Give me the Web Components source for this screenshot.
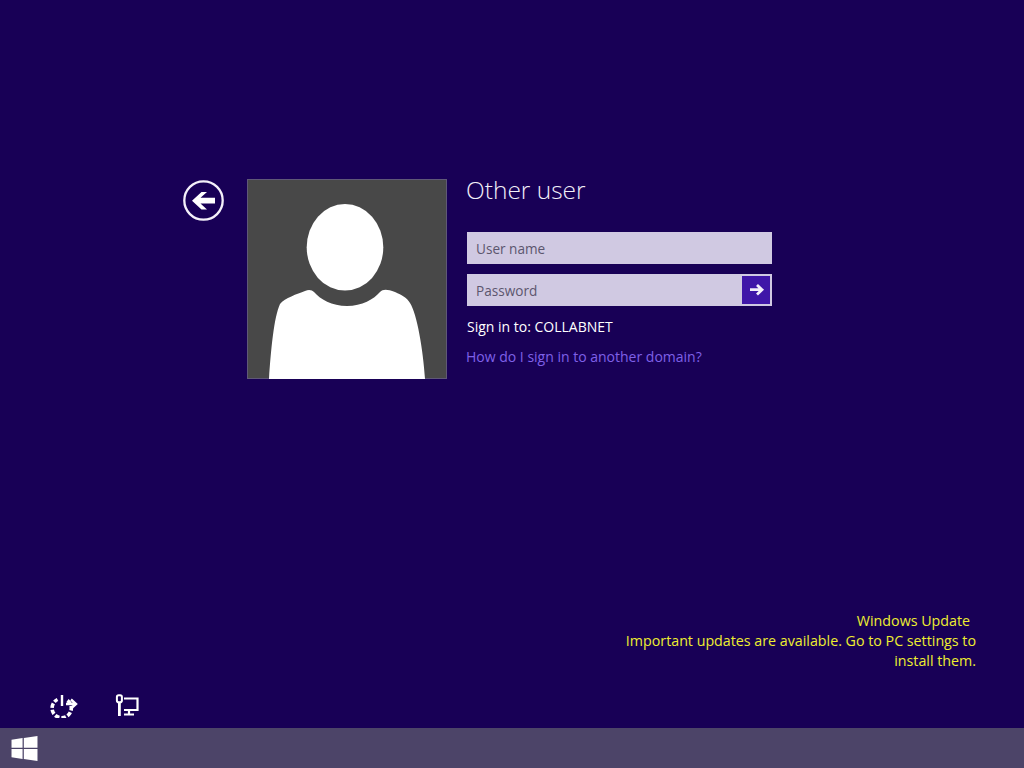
<!DOCTYPE html>
<html>
<head>
<meta charset="utf-8">
<title>Sign in</title>
<style>
    html, body { margin: 0; height: 100%; }
    body { background: #180056; font-family: "Open Sans", "Noto Sans", sans-serif; overflow: hidden; }
</style>
</head>
<body>
<v-lock-screen>
    <v-back-button slot="back"></v-back-button>
    <v-user-tile slot="tile"></v-user-tile>
    <v-login-form slot="form" heading="Other user" domain="COLLABNET" help="How do I sign in to another domain?"></v-login-form>
    <v-notice slot="notice" title="Windows Update">Important updates are available. Go to PC settings to<br>install them.</v-notice>
    <v-status-icons slot="status"></v-status-icons>
    <v-taskbar slot="taskbar"></v-taskbar>
</v-lock-screen>
<script>
    customElements.define('v-lock-screen', class extends HTMLElement {
        constructor() {
            super();
            const shadowRoot = this.attachShadow({mode: 'open'});
            shadowRoot.innerHTML = `<style>
                :host { display: flex; flex-direction: column; height: 768px; }
                .main { flex: 1; display: flex; flex-direction: column; min-height: 0; }
                .login { display: flex; align-items: flex-start; padding: 179px 0 0 183px; }
                .spacer { flex: 1; }
            </style>
            <div class="main">
                <div class="login">
                    <slot name="back"></slot>
                    <slot name="tile"></slot>
                    <slot name="form"></slot>
                </div>
                <div class="spacer"></div>
                <slot name="notice"></slot>
                <slot name="status"></slot>
            </div>
            <slot name="taskbar"></slot>`;
        }
    });

    customElements.define('v-back-button', class extends HTMLElement {
        constructor() {
            super();
            const shadowRoot = this.attachShadow({mode: 'open'});
            shadowRoot.innerHTML = `<style>
                :host { display: block; width: 41px; height: 41px; margin: 1px 23px 0 0; }
                svg { display: block; }
            </style>
            <svg width="41" height="41" viewBox="0 0 41 41">
                <circle cx="20.5" cy="20.5" r="19.2" fill="none" stroke="#f4f0fa" stroke-width="2.3"/>
                <path d="M18.5 12 L9 20.7 L18.5 29.5 H24 L17.5 23.6 H32 V17.8 H17.5 L24 12 Z" fill="#fff"/>
            </svg>`;
        }
    });

    customElements.define('v-user-tile', class extends HTMLElement {
        constructor() {
            super();
            const shadowRoot = this.attachShadow({mode: 'open'});
            shadowRoot.innerHTML = `<style>
                :host { display: block; width: 200px; height: 200px; margin-right: 20px; }
                svg { display: block; }
            </style>
            <svg width="200" height="200" viewBox="0 0 200 200">
                <rect width="200" height="200" fill="#484848"/>
                <rect x=".5" y=".5" width="199" height="199" fill="none" stroke="#5f5877"/>
                <ellipse cx="98" cy="68.3" rx="38.3" ry="43.3" fill="#fff"/>
                <path d="M22 200 C24 170 27 138 33 125 C38 119 50 115 58 112 C62 110 65 111 67 113 C73 120 85 127 100 127 C115 127 127 120 133 113 C136 110 140 110 148 113 C155 116 160 119 163 124 C170 135 176 170 178 200 Z" fill="#fff"/>
            </svg>`;
        }
    });

    customElements.define('v-text-field', class extends HTMLElement {
        constructor() {
            super();
            const shadowRoot = this.attachShadow({mode: 'open'});
            shadowRoot.innerHTML = `<style>
                :host { display: flex; align-items: center; height: 32px; width: 305px; background: #d0c9e2; box-sizing: border-box; }
                .label { flex: 1; padding-left: 9px; font-size: 13.6px; color: #5c566e; }
                ::slotted(*) { flex: none; }
            </style>
            <div class="label">${this.getAttribute('placeholder')}</div>
            <slot></slot>`;
        }
    });

    customElements.define('v-submit-button', class extends HTMLElement {
        constructor() {
            super();
            const shadowRoot = this.attachShadow({mode: 'open'});
            shadowRoot.innerHTML = `<style>
                :host { display: block; width: 28px; height: 28px; margin-right: 2px; background: #3f16a8; }
                svg { display: block; }
            </style>
            <svg width="28" height="28" viewBox="0 0 28 28">
                <path d="M8 13.7 H19.5 M15 9 L20 13.7 L15 18.4" fill="none" stroke="#f4effa" stroke-width="2.8"/>
            </svg>`;
        }
    });

    customElements.define('v-login-form', class extends HTMLElement {
        constructor() {
            super();
            const shadowRoot = this.attachShadow({mode: 'open'});
            shadowRoot.innerHTML = `<style>
                :host { display: flex; flex-direction: column; color: #fff; font-size: 14px; }
                h1 { margin: 0 0 24px -1px; height: 29px; font-size: 24.5px; line-height: 22px; font-weight: 300; color: #f2eff8; }
                v-text-field { margin-bottom: 10px; }
                .domain { margin-top: 10px; line-height: 22px; }
                a { margin-top: 8px; margin-left: -1px; line-height: 22px; color: #7f60e8; text-decoration: none; }
            </style>
            <h1>${this.getAttribute('heading')}</h1>
            <v-text-field placeholder="User name"></v-text-field>
            <v-text-field placeholder="Password" style="margin-bottom:0"><v-submit-button></v-submit-button></v-text-field>
            <div class="domain">Sign in to: ${this.getAttribute('domain')}</div>
            <a href="#">${this.getAttribute('help')}</a>`;
        }
    });

    customElements.define('v-notice', class extends HTMLElement {
        constructor() {
            super();
            const shadowRoot = this.attachShadow({mode: 'open'});
            shadowRoot.innerHTML = `<style>
                :host { display: block; padding-right: 48px; text-align: right; color: #eeee30; font-size: 14.25px; line-height: 20px; }
                .title { padding-right: 6px; }
            </style>
            <div class="title">${this.getAttribute('title')}</div>
            <div><slot></slot></div>`;
        }
    });

    customElements.define('v-status-icons', class extends HTMLElement {
        constructor() {
            super();
            const shadowRoot = this.attachShadow({mode: 'open'});
            shadowRoot.innerHTML = `<style>
                :host { display: flex; gap: 37px; padding: 23px 0 10px 50px; }
                svg { display: block; }
            </style>
            <svg width="28" height="24" viewBox="0 0 28 24">
                <path d="M17.5 6.5 A9.6 9.6 0 1 1 7.5 5.5" fill="none" stroke="#fff" stroke-width="3.6" stroke-dasharray="4.6 1.9"/>
                <path d="M12 1 V12" fill="none" stroke="#fff" stroke-width="2.4"/>
                <path d="M16 10 H25.5 M21 5.5 L26 10 L21 14.5" fill="none" stroke="#fff" stroke-width="2.4"/>
            </svg>
            <svg width="24" height="24" viewBox="0 0 24 24">
                <rect x="1.9" y="1.2" width="5" height="7" rx="1.8" fill="none" stroke="#fff" stroke-width="2"/>
                <path d="M4.4 8 V22" stroke="#fff" stroke-width="2.8"/>
                <path d="M9 4.5 H22.5 V16 H9 M14 16 V20.5 M9 20.5 H19" fill="none" stroke="#fff" stroke-width="2.2"/>
            </svg>`;
        }
    });

    customElements.define('v-taskbar', class extends HTMLElement {
        constructor() {
            super();
            const shadowRoot = this.attachShadow({mode: 'open'});
            shadowRoot.innerHTML = `<style>
                :host { display: flex; align-items: center; height: 40px; padding-left: 11px; background: #4c4468; flex: none; }
                svg { display: block; }
            </style>
            <svg width="27" height="25" viewBox="0 0 27 26">
                <path d="M0 3.8 L11.5 2.2 V12.3 H0 Z M12.8 2 L27 0 V12.3 H12.8 Z M0 13.6 H11.5 V23.8 L0 22.2 Z M12.8 13.6 H27 V26 L12.8 24 Z" fill="#fff"/>
            </svg>`;
        }
    });
</script>
</body>
</html>
